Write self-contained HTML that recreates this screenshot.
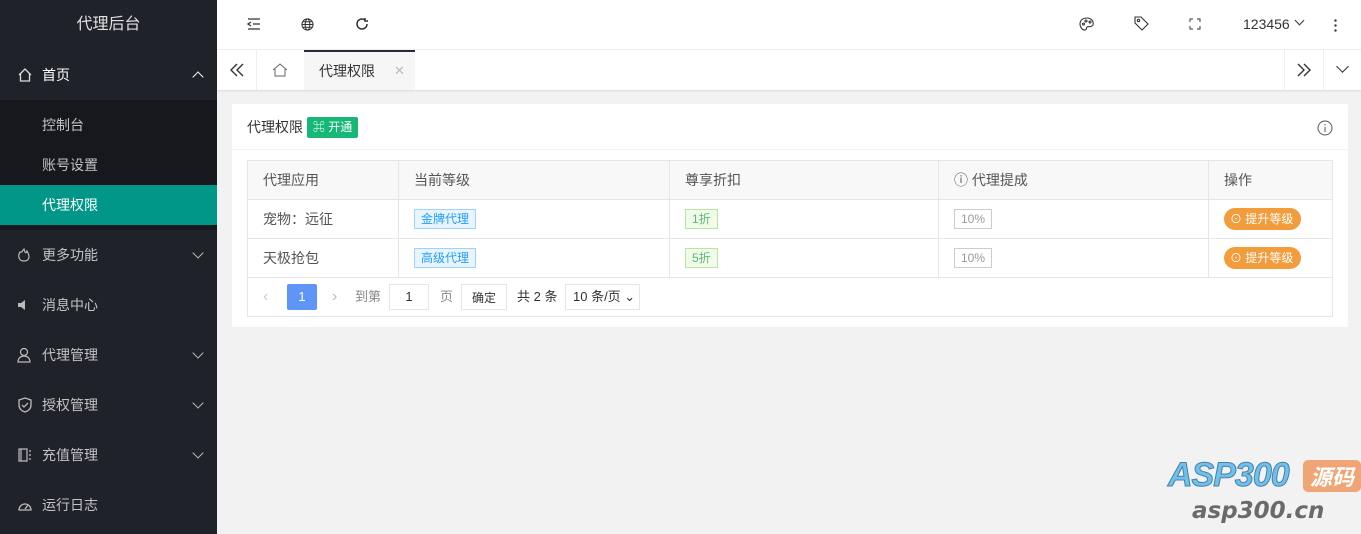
<!DOCTYPE html><html><head><meta charset="utf-8"><style>
*{box-sizing:border-box;margin:0;padding:0}
body{width:1361px;height:534px;overflow:hidden;font-family:"Liberation Sans","Noto Sans CJK SC",sans-serif;font-size:14px;color:#333;background:#f2f2f2;position:relative}
.side{position:absolute;left:0;top:0;width:217px;height:534px;background:#20222a;color:#c2c3c5}
.logo{height:50px;line-height:50px;text-align:center;font-size:16px;color:#e0e0e0}
.mi{position:absolute;left:0;width:217px;height:50px;line-height:50px;padding-left:42px;font-size:14px}
.mi svg{position:absolute;left:17px;top:17px}
.arr{position:absolute;right:15px;top:19px;width:8px;height:8px;border-right:1.5px solid #bbb;border-bottom:1.5px solid #bbb;transform:rotate(45deg)}
.arr.up{transform:rotate(-135deg);top:23px;border-color:#fff}
.sub{position:absolute;left:0;top:100px;width:217px;height:130px;background:#17181d}
.si{position:absolute;left:0;width:217px;height:40px;line-height:40px;padding-left:42px}
.top{position:absolute;left:217px;top:0;right:0;height:50px;background:#fff;border-bottom:1px solid #f0f0f0}
.tabs{position:absolute;left:217px;top:50px;right:0;height:40px;background:#fff;box-shadow:0 1px 2px rgba(0,0,0,.1)}
.card{position:absolute;left:232px;top:104px;width:1116px;height:223px;background:#fff;border-radius:2px}
table{position:absolute;left:15px;top:56px;width:1086px;border-collapse:collapse}
td,th{border:1px solid #e6e6e6;height:39px;padding-left:15px;text-align:left;font-weight:normal;font-size:14px;color:#555}
th{background:#f8f8f8}
.tag{display:inline-block;font-size:12px;height:20px;line-height:18px;padding:0 6px;border:1px solid}
.b{color:#1e9fff;background:#e8f4ff;border-color:#9fd3ff}
.g{color:#5fb878;background:#f0fbe9;border-color:#b8e6a0}
.gr{color:#999;border-color:#ccc}
.btn{display:inline-block;background:#f29c3b;color:#fff;border-radius:12px;height:22px;line-height:22px;font-size:12px;padding:0 8px 0 6px}
.pg{position:absolute;left:15px;top:173px;width:1086px;height:40px;border:1px solid #e6e6e6;border-top:none;font-size:13px;color:#666}
.pg span{line-height:26px}
</style></head><body>
<div class="side">
<div class="logo">代理后台</div>
<div class="mi" style="top:50px;color:#fff"><svg width="16" height="16" viewBox="0 0 16 16" fill="none" stroke="#ddd" stroke-width="1.3"><path d="M2 8L8 2l6 6M3.5 7v7h9V7"/></svg>首页<span class="arr up"></span></div>
<div class="sub">
<div class="si" style="top:5px">控制台</div>
<div class="si" style="top:45px">账号设置</div>
<div class="si" style="top:85px;background:#009688;color:#fff">代理权限</div>
</div>
<div class="mi" style="top:230px"><svg width="14" height="16" viewBox="0 0 14 16" fill="none" stroke="#bbb" stroke-width="1.2"><path d="M3 5C1 8 1 14 7 14s6-5 3-10C9 7 8 6 7 2 5 4 5 6 3 5z"/></svg>更多功能<span class="arr"></span></div>
<div class="mi" style="top:280px"><svg width="14" height="16" viewBox="0 0 14 16" fill="#bbb"><path d="M1 6h3l4-3v10L4 10H1z"/></svg>消息中心</div>
<div class="mi" style="top:330px"><svg width="16" height="16" viewBox="0 0 16 16" fill="none" stroke="#bbb" stroke-width="1.2"><circle cx="7" cy="5" r="3.5"/><path d="M1 15c0-4 3-6 6-6s6 2 6 6z"/></svg>代理管理<span class="arr"></span></div>
<div class="mi" style="top:380px"><svg width="16" height="16" viewBox="0 0 16 16" fill="none" stroke="#bbb" stroke-width="1.3"><path d="M8 1l6 2v5c0 4-3 6-6 7-3-1-6-3-6-7V3z"/><path d="M5 8l2 2 4-4"/></svg>授权管理<span class="arr"></span></div>
<div class="mi" style="top:430px"><svg width="16" height="16" viewBox="0 0 16 16" fill="none" stroke="#bbb" stroke-width="1.2"><path d="M2 2h8v12H2zM4 2v12M12 4h2M12 8h2M12 12h2"/></svg>充值管理<span class="arr"></span></div>
<div class="mi" style="top:480px"><svg width="16" height="16" viewBox="0 0 16 16" fill="none" stroke="#bbb" stroke-width="1.3"><path d="M2 13a6 6 0 1 1 12 0z"/><path d="M8 12l3-4"/></svg>运行日志</div>
</div>
<div class="top">
<svg style="position:absolute;left:30px;top:17px" width="14" height="14" viewBox="0 0 14 14" stroke="#333" stroke-width="1.3" fill="none"><path d="M1 2h12M6 7h7M1 12h12M4 5L1 7l3 2"/></svg>
<svg style="position:absolute;left:84px;top:18px" width="13" height="13" viewBox="0 0 14 14" stroke="#333" stroke-width="1.1" fill="none"><circle cx="7" cy="7" r="6"/><ellipse cx="7" cy="7" rx="2.5" ry="6"/><path d="M1 7h12M2 4h10M2 10h10"/></svg>
<svg style="position:absolute;left:138px;top:17px" width="14" height="14" viewBox="0 0 14 14" stroke="#333" stroke-width="1.5" fill="none"><path d="M12 7a5 5 0 1 1-2-4M10 1v3h3"/></svg>
<svg style="position:absolute;left:862px;top:17px" width="16" height="14" viewBox="0 0 16 14" stroke="#333" stroke-width="1.1" fill="none"><path d="M8 1C3 1 1 4 1 7s2 6 5 6c2 0 1-2 2-3s4 1 6-2c1-4-2-7-6-7z"/><circle cx="4.5" cy="7" r="1"/><circle cx="7" cy="4" r="1"/><circle cx="11" cy="5" r="1"/></svg>
<svg style="position:absolute;left:917px;top:16px" width="15" height="15" viewBox="0 0 15 15" stroke="#333" stroke-width="1.1" fill="none"><path d="M1 1h6l7 7-6 6-7-7z"/><circle cx="4.5" cy="4.5" r="1.2"/></svg>
<svg style="position:absolute;left:972px;top:18px" width="12" height="12" viewBox="0 0 12 12" stroke="#333" stroke-width="1" fill="none"><path d="M1 4V1h3M8 1h3v3M11 8v3H8M4 11H1V8"/></svg>
<span style="position:absolute;left:1026px;top:16px;font-size:14px;color:#333">123456</span>
<span style="position:absolute;left:1079px;top:17px;width:7px;height:7px;border-right:1px solid #333;border-bottom:1px solid #333;transform:rotate(45deg)"></span>
<span style="position:absolute;left:1117px;top:18px;width:3px;height:14px;background:radial-gradient(circle,#333 1.2px,transparent 1.3px) 0 0/3px 5px"></span>
</div>
<div class="tabs">
<div style="position:absolute;left:0;top:0;width:40px;height:40px;border-right:1px solid #eee"><svg style="position:absolute;left:13px;top:13px" width="14" height="14" viewBox="0 0 14 14" fill="none" stroke="#333" stroke-width="1.4"><path d="M7 1L1 7l6 6M13 1L7 7l6 6"/></svg></div>
<svg style="position:absolute;left:55px;top:12px" width="16" height="16" viewBox="0 0 16 16" fill="none" stroke="#666" stroke-width="1"><path d="M1 8l7-6 7 6M3 7v7h10V7"/></svg>
<div style="position:absolute;left:87px;top:0;width:111px;height:40px;background:#f6f6f6;border-top:2px solid #292b34;line-height:38px;padding-left:15px;color:#333">代理权限<span style="position:absolute;left:90px;color:#bbb;font-size:13px">✕</span></div>
<div style="position:absolute;right:38px;top:0;width:39px;height:40px;border-left:1px solid #eee"><svg style="position:absolute;left:12px;top:13px" width="14" height="14" viewBox="0 0 14 14" fill="none" stroke="#333" stroke-width="1.4"><path d="M1 1l6 6-6 6M7 1l6 6-6 6"/></svg></div>
<div style="position:absolute;right:0;top:0;width:38px;height:40px;border-left:1px solid #eee"><span style="position:absolute;left:14px;top:12px;width:9px;height:9px;border-right:1px solid #333;border-bottom:1px solid #333;transform:rotate(45deg)"></span></div>
</div>
<div class="card">
<div style="height:46px;border-bottom:1px solid #f2f2f2;line-height:46px;padding-left:15px;font-size:14px;color:#333">代理权限 <span style="display:inline-block;background:#16b777;color:#fff;font-size:12px;height:21px;line-height:21px;padding:0 6px;border-radius:2px;vertical-align:1px">⌘ 开通</span></div>
<svg style="position:absolute;right:15px;top:16px" width="16" height="16" viewBox="0 0 16 16" fill="none" stroke="#555" stroke-width="1"><circle cx="8" cy="8" r="7"/><path d="M8 7v5M8 4v1.5"/></svg>
<table>
<tr><th style="width:151px">代理应用</th><th style="width:271px">当前等级</th><th style="width:269px">尊享折扣</th><th style="width:270px">ⓘ 代理提成</th><th>操作</th></tr>
<tr><td>宠物：远征</td><td><span class="tag b">金牌代理</span></td><td><span class="tag g">1折</span></td><td><span class="tag gr">10%</span></td><td><span class="btn">⊙ 提升等级</span></td></tr>
<tr><td>天极抢包</td><td><span class="tag b">高级代理</span></td><td><span class="tag g">5折</span></td><td><span class="tag gr">10%</span></td><td><span class="btn">⊙ 提升等级</span></td></tr>
</table>
<div class="pg">
<span style="position:absolute;left:15px;top:7px;color:#ccc;font-size:16px">‹</span>
<span style="position:absolute;left:39px;top:7px;width:30px;height:26px;background:#5f95f6;color:#fff;text-align:center;border-radius:2px">1</span>
<span style="position:absolute;left:84px;top:7px;color:#bbb;font-size:16px">›</span>
<span style="position:absolute;left:107px;top:7px;color:#888">到第</span>
<span style="position:absolute;left:141px;top:7px;width:40px;height:26px;border:1px solid #e6e6e6;text-align:center;line-height:24px;color:#333">1</span>
<span style="position:absolute;left:192px;top:7px;color:#888">页</span>
<span style="position:absolute;left:213px;top:7px;width:46px;height:26px;border:1px solid #e6e6e6;text-align:center;color:#333;font-size:12px">确定</span>
<span style="position:absolute;left:269px;top:7px;color:#333">共 2 条</span>
<span style="position:absolute;left:317px;top:7px;width:75px;height:26px;border:1px solid #e6e6e6;line-height:24px;padding-left:7px;color:#333">10 条/页 ⌄</span>
</div>
</div>
<div style="position:absolute;left:1168px;top:456px;font:italic bold 34px 'Liberation Sans',sans-serif;color:#6cc2ec;-webkit-text-stroke:1px #4a7fa8;letter-spacing:-1px">ASP300</div>
<div style="position:absolute;left:1303px;top:460px;width:58px;height:32px;background:#f0a576;border-radius:5px;color:#fff;font:italic bold 22px 'Noto Sans CJK SC',sans-serif;text-align:center;line-height:32px">源码</div>
<div style="position:absolute;left:1192px;top:498px;font:italic bold 23px 'DejaVu Sans',sans-serif;color:#6a6a6a">asp300.cn</div>
</body></html>
